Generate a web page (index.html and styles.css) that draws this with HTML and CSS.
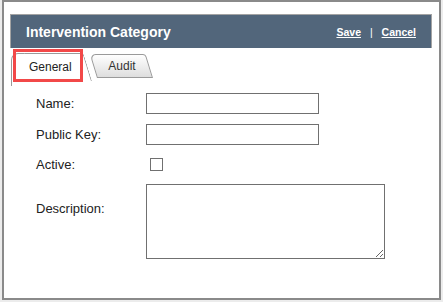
FILE: index.html
```html
<html>
<head>
<title>Intervention Category</title>
<link rel="stylesheet" href="styles.css">
</head>
<body>

<div class="dialog">
  <div class="header">
    <span class="title">Intervention Category</span>
    <span class="actions">
      <a href="#">Save</a>
      <span class="sep">|</span>
      <a href="#">Cancel</a>
    </span>
  </div>

  <div class="tabs">
    <div class="tab active">General</div>
    <div class="tab">Audit</div>
    <div class="highlight"></div>
  </div>

  <div class="form">
    <label class="label">Name:</label>
    <input type="text" class="field">

    <label class="label">Public Key:</label>
    <input type="text" class="field">

    <label class="label">Active:</label>
    <input type="checkbox" class="check">

    <label class="label top">Description:</label>
    <textarea class="area"></textarea>
  </div>
</div>

</body>
</html>
```

FILE: styles.css
```css
body {
  margin: 0;
  background-color: #ececec;
  font-family: 'Liberation Sans', Arial, sans-serif;
  color: #222;
}

.dialog {
  box-sizing: border-box;
  width: 439px;
  height: 300px;
  margin-left: 2px;
  padding: 12px 7px 0 6px;
  background-color: #fff;
  border: 2px solid #8a8a8a;
}

.header {
  display: flex;
  align-items: center;
  justify-content: space-between;
  height: 33px;
  padding: 0 15px 0 15px;
  background-color: #52667b;
  border: 1px solid #a3a3a3;
  border-bottom: none;
  color: #fff;
}

.title {
  font-size: 14px;
  font-weight: bold;
}

.actions {
  font-size: 10.5px;
  font-weight: bold;
}

.actions a {
  color: #fff;
}

.sep {
  margin: 0 6px;
  font-weight: normal;
}

/* tabs */
.tabs {
  position: relative;
  display: flex;
  align-items: flex-start;
  padding-left: 1px;
  margin-top: 5px;
  height: 28px;
  font-size: 12px;
}

.tab {
  position: relative;
  z-index: 0;
  box-sizing: border-box;
  height: 24px;
  line-height: 24px;
  margin-top: 1px;
}

.tab::before {
  content: '';
  position: absolute;
  inset: 0;
  z-index: -1;
  background: linear-gradient(#fff, #dedede);
  border: 1px solid #9a9a9a;
  border-radius: 6px 3px 0 0;
  transform: skewX(17deg);
  transform-origin: bottom left;
}

.tab:not(.active) {
  width: 56px;
  margin-left: 5px;
  padding-right: 6px;
  text-align: center;
  color: #333;
}

.tab.active {
  z-index: 1;
  width: 81px;
  height: 28px;
  line-height: 28px;
  margin-top: 0;
  padding-left: 18px;
}

.tab.active::before {
  right: auto;
  bottom: -5px;
  width: 60px;
  background: #fff;
  border-right: none;
  border-bottom: none;
  border-radius: 7px 0 0 0;
  transform: none;
}

.tab.active::after {
  content: '';
  position: absolute;
  top: 0;
  bottom: 0;
  left: 22px;
  right: 0;
  z-index: -1;
  background: #fff;
  border-top: 1px solid #9a9a9a;
  border-right: 1px solid #9a9a9a;
  border-radius: 0 3px 0 0;
  transform: skewX(17deg);
  transform-origin: bottom left;
}

.highlight {
  position: absolute;
  left: 3px;
  top: -4px;
  width: 64px;
  height: 27px;
  border: 3px solid #f24848;
  z-index: 2;
}

/* form */
.form {
  display: grid;
  grid-template-columns: 110px auto;
  row-gap: 10px;
  align-items: center;
  padding: 12px 0 0 26px;
  font-size: 13px;
}

.label {
  line-height: 19px;
}

.label.top {
  align-self: start;
  margin-top: 15px;
}

.field {
  box-sizing: border-box;
  width: 173px;
  height: 21px;
  margin: 0;
  border: 1px solid #707070;
}

.check {
  appearance: none;
  width: 13px;
  height: 13px;
  margin: 0 0 0 4px;
  border: 1px solid #707070;
  background: #fff;
}

.area {
  box-sizing: border-box;
  width: 239px;
  height: 75px;
  margin: 0;
  border: 1px solid #707070;
}
```
